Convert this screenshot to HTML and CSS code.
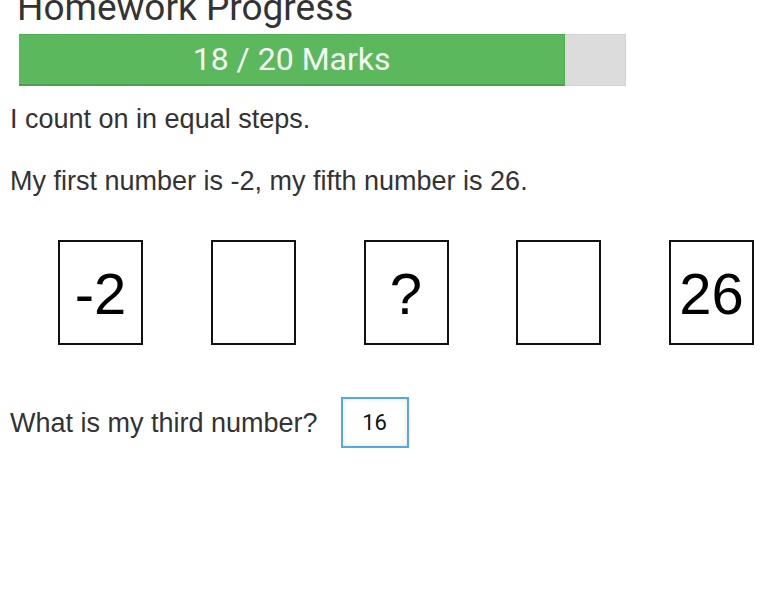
FILE: index.html
```html
<!DOCTYPE html>
<html lang="en">
<head>
<meta charset="utf-8">
<title>Homework Progress</title>
<link rel="stylesheet" href="styles.css">
</head>
<body>
  <h1 class="title">Homework Progress</h1>
  <div class="progress">
    <div class="progress-fill" style="width: 90%">18 / 20 Marks</div>
  </div>
  <p class="text first">I count on in equal steps.</p>
  <p class="text second">My first number is -2, my fifth number is 26.</p>
  <div class="sequence">
    <div class="cell">-2</div>
    <div class="cell"></div>
    <div class="cell">?</div>
    <div class="cell"></div>
    <div class="cell">26</div>
  </div>
  <div class="question">
    <span class="text">What is my third number?</span>
    <input class="answer" type="text" value="16">
  </div>
</body>
</html>
```

FILE: styles.css
```css
html, body {
  margin: 0;
  padding: 0;
  background: #ffffff;
}

body {
  padding: 0 10px;
  font-family: "Liberation Sans", Arial, sans-serif;
  color: #333333;
}

.title {
  margin: -4px 0 0 7px;
  font-family: Roboto, "Noto Sans", sans-serif;
  font-weight: 400;
  font-size: 37px;
  line-height: 24px;
  color: #333333;
}

.progress {
  margin: 14px 0 0 9px;
  width: 607px;
  height: 52px;
  background: #dcdcdc;
  box-shadow: inset 0 0 0 1px #d2d2d2;
  display: flex;
}

.progress-fill {
  height: 52px;
  box-sizing: border-box;
  background: #5cb85c;
  border-top: 1px solid #4fae4f;
  border-bottom: 2px solid #4e9f50;
  border-right: 1px solid #4cae4c;
  color: #f4fbf4;
  font-family: Roboto, "Noto Sans", sans-serif;
  font-size: 32px;
  line-height: 48px;
  text-align: center;
}

.text {
  font-size: 27px;
  line-height: 30px;
  color: #333333;
}

p.text {
  margin: 0;
}

.first {
  margin-top: 18px !important;
}

.second {
  margin-top: 32px !important;
}

.sequence {
  display: flex;
  gap: 67.75px;
  margin-top: 44px;
  padding-left: 48px;
}

.cell {
  box-sizing: border-box;
  width: 85px;
  height: 105px;
  border: 2px solid #111111;
  display: flex;
  align-items: center;
  justify-content: center;
  font-family: "Liberation Sans", Arial, sans-serif;
  font-size: 58px;
  color: #000000;
  padding-top: 2px;
}

.question {
  display: flex;
  align-items: center;
  gap: 23px;
  margin-top: 52px;
}

.answer {
  box-sizing: border-box;
  width: 68px;
  height: 51px;
  margin: 0;
  padding: 0;
  border: 2px solid #56a7e3;
  background: #ffffff;
  box-shadow: inset 0 0 5px rgba(0, 0, 0, 0.12);
  font-family: Roboto, "Noto Sans", sans-serif;
  font-size: 22px;
  color: #111111;
  text-align: center;
  outline: none;
}
```
